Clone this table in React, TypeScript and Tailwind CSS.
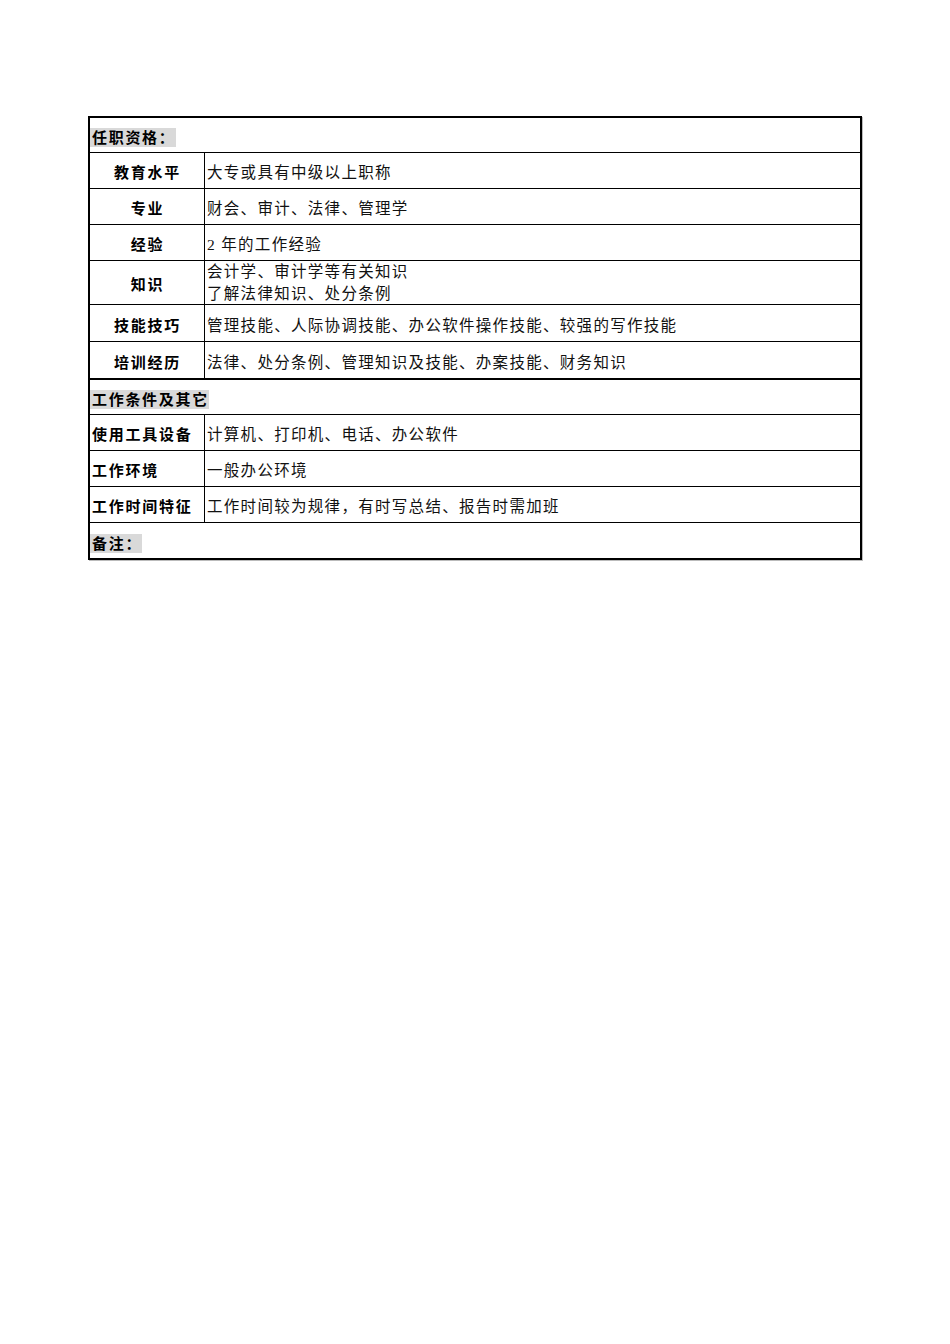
const FONT = "font-['Liberation_Serif','Noto_Sans_CJK_SC',serif]";
const BOLD = "font-['Liberation_Sans','Noto_Sans_CJK_SC',sans-serif] font-bold";

type Row = { label: string; value: string[]; h: string; center?: boolean; thick?: boolean };

const quals: Row[] = [
  { label: "教育水平", value: ["大专或具有中级以上职称"], h: "h-[36px]", center: true },
  { label: "专业", value: ["财会、审计、法律、管理学"], h: "h-[36px]", center: true },
  { label: "经验", value: ["2 年的工作经验"], h: "h-[36px]", center: true },
  { label: "知识", value: ["会计学、审计学等有关知识", "了解法律知识、处分条例"], h: "h-[44px]", center: true },
  { label: "技能技巧", value: ["管理技能、人际协调技能、办公软件操作技能、较强的写作技能"], h: "h-[37px]", center: true },
  { label: "培训经历", value: ["法律、处分条例、管理知识及技能、办案技能、财务知识"], h: "h-[38px]", center: true, thick: true },
];

const conds: Row[] = [
  { label: "使用工具设备", value: ["计算机、打印机、电话、办公软件"], h: "h-[36px]" },
  { label: "工作环境", value: ["一般办公环境"], h: "h-[36px]" },
  { label: "工作时间特征", value: ["工作时间较为规律，有时写总结、报告时需加班"], h: "h-[36px]" },
];

function SectionRow({ title, h }: { title: string; h: string }) {
  return (
    <div className={`flex items-end border-b border-black pb-[5px] ${h}`}>
      <span className={`${BOLD} bg-[#d9d9d9] pl-[2px] text-[15px] leading-[19px] tracking-[1.7px] text-black`}>
        {title}
      </span>
    </div>
  );
}

function DataRow({ row }: { row: Row }) {
  const multi = row.value.length > 1;
  return (
    <div className={`flex ${row.h} ${row.thick ? "border-b-2" : "border-b"} border-black`}>
      <div
        className={`flex w-[115px] shrink-0 items-center border-r border-black pt-[6px] ${
          row.center ? "justify-center pl-[1px]" : "pl-[2px]"
        } ${BOLD} text-[15px] tracking-[1.75px] text-black`}
      >
        {row.label}
      </div>
      <div
        className={`flex flex-col justify-center pl-[2px] ${
          multi ? "pt-[1px] leading-[22px]" : "pt-[5px] leading-[24px]"
        } ${FONT} text-[15.5px] tracking-[1.3px] text-[#111]`}
      >
        {row.value.map((v) => (
          <div key={v}>{v}</div>
        ))}
      </div>
    </div>
  );
}

export default function App() {
  return (
    <div className="min-h-[1344px] w-[950px] bg-white pt-[116px]">
      <div className="ml-[88px] w-[774px] border-2 border-black shadow-[1px_1px_0_#bbb]">
        <SectionRow title="任职资格：" h="h-[35px]" />
        {quals.map((r) => (
          <DataRow key={r.label} row={r} />
        ))}
        <SectionRow title="工作条件及其它" h="h-[35px]" />
        {conds.map((r) => (
          <DataRow key={r.label} row={r} />
        ))}
        <div className="flex h-[35px] items-end pb-[5px]">
          <span className={`${BOLD} bg-[#d9d9d9] pl-[2px] text-[15px] leading-[19px] tracking-[1.7px] text-black`}>
            备注：
          </span>
        </div>
      </div>
    </div>
  );
}
